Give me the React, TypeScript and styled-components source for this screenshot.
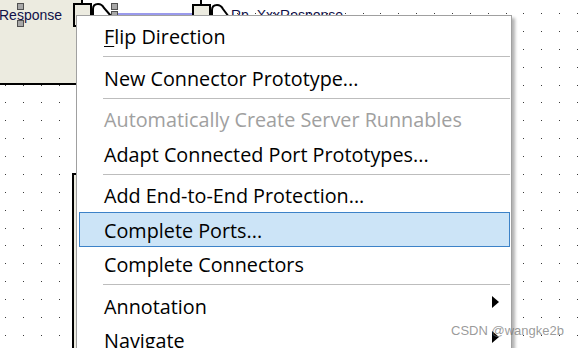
import React from "react";
import styled, { createGlobalStyle } from "styled-components";

const GlobalStyle = createGlobalStyle`
  html, body { margin: 0; padding: 0; background: #fff; overflow: hidden; }
  #root { width: 579px; height: 348px; }
`;

const Canvas = styled.div`
  position: relative;
  width: 579px;
  height: 348px;
  overflow: hidden;
  background: #fff;
  font-family: "Liberation Sans", Arial, sans-serif;
`;

const Layer = styled.svg`
  position: absolute;
  left: 0;
  top: 0;
`;

const SwcBox = styled.div<{ $x: number; $y: number; $w: number; $h: number }>`
  position: absolute;
  left: ${(p) => p.$x}px;
  top: ${(p) => p.$y}px;
  width: ${(p) => p.$w}px;
  height: ${(p) => p.$h}px;
  box-sizing: border-box;
  background: #ecebe0;
  border: 2px solid #000;
`;

const PortLabel = styled.div<{ $x: number; $y: number }>`
  position: absolute;
  left: ${(p) => p.$x}px;
  top: ${(p) => p.$y}px;
  font-size: 14px;
  line-height: 16px;
  color: #101048;
  white-space: nowrap;
`;

const Handle = styled.div<{ $x: number; $y: number }>`
  position: absolute;
  left: ${(p) => p.$x}px;
  top: ${(p) => p.$y}px;
  width: 7px;
  height: 7px;
  box-sizing: border-box;
  background: #a8a8a8;
  border: 1px solid #505050;
`;

const Menu = styled.div`
  position: absolute;
  left: 76px;
  top: 15px;
  width: 436px;
  box-sizing: border-box;
  background: #fff;
  border: 1px solid #a0a0a0;
  padding: 2.5px 0 30px;
  box-shadow: 3px 3px 3px rgba(0, 0, 0, 0.3);
  font-family: "Open Sans", "Noto Sans", sans-serif;
  font-size: 19.8px;
  color: #000;
  display: flex;
  flex-direction: column;
`;

const Item = styled.div<{ $disabled?: boolean; $active?: boolean }>`
  position: relative;
  height: 34.5px;
  line-height: 32.5px;
  margin: 0 1px 0 2px;
  padding: 1.5px 0 0 24px;
  box-sizing: border-box;
  border: 1px solid ${(p) => (p.$active ? "#3c82c8" : "transparent")};
  background: ${(p) => (p.$active ? "#cce4f7" : "transparent")};
  color: ${(p) => (p.$disabled ? "#a0a0a0" : "#000")};
  white-space: nowrap;
`;

const Mnemonic = styled.span`
  text-decoration: underline;
  text-decoration-thickness: 1px;
  text-underline-offset: 2px;
`;

const Separator = styled.div`
  height: 1px;
  margin: 3px 1px 3px 26px;
  background: #bdbdbd;
`;

const SubArrow = styled.span`
  position: absolute;
  right: 10px;
  top: 7px;
  width: 0;
  height: 0;
  border-left: 7px solid #000;
  border-top: 6.5px solid transparent;
  border-bottom: 6.5px solid transparent;
`;

const Watermark = styled.div`
  position: absolute;
  left: 451px;
  top: 324px;
  font-family: "Liberation Sans", Arial, sans-serif;
  font-size: 13px;
  line-height: 13px;
  color: rgba(110, 110, 110, 0.7);
  white-space: nowrap;
`;

const GRID = 17.875;

function DotGrid() {
  const dots: React.ReactElement[] = [];
  for (let r = 0; r < 20; r++) {
    const y = Math.round(13 + r * GRID);
    if (y > 347) break;
    for (let c = 0; c < 33; c++) {
      const x = Math.round(5 + c * GRID);
      dots.push(<rect key={`${r}-${c}`} x={x} y={y} width={1} height={1} />);
    }
  }
  return (
    <Layer width={579} height={348} shapeRendering="crispEdges" fill="#3a3a3a">
      {dots}
    </Layer>
  );
}

function PortShapes() {
  return (
    <Layer width={579} height={348}>
      <rect x={117} y={13} width={76} height={2} fill="#9a9aec" />
      <rect x={74} y={4} width={17} height={22} fill="#ecebe0" stroke="#000" strokeWidth={2} />
      <path d="M93,26 V9 Q93,4 98,4 Q102,4 104,8 L111,16" fill="#fff" stroke="#000" strokeWidth={2} />
      <line x1={201} y1={0} x2={201} y2={5} stroke="#000" strokeWidth={2} />
      <rect x={193} y={5} width={17} height={22} fill="#ecebe0" stroke="#000" strokeWidth={2} />
      <path d="M212,26 V10 Q212,5 217,5 Q221,5 223,9 L229,17" fill="#fff" stroke="#000" strokeWidth={2} />
    </Layer>
  );
}

type Entry =
  | { kind: "item"; label: React.ReactNode; disabled?: boolean; active?: boolean; sub?: boolean }
  | { kind: "sep" };

const entries: Entry[] = [
  { kind: "item", label: (<><Mnemonic>F</Mnemonic>lip Direction</>) },
  { kind: "sep" },
  { kind: "item", label: "New Connector Prototype..." },
  { kind: "sep" },
  { kind: "item", label: "Automatically Create Server Runnables", disabled: true },
  { kind: "item", label: "Adapt Connected Port Prototypes..." },
  { kind: "sep" },
  { kind: "item", label: "Add End-to-End Protection..." },
  { kind: "item", label: "Complete Ports...", active: true },
  { kind: "item", label: "Complete Connectors" },
  { kind: "sep" },
  { kind: "item", label: "Annotation", sub: true },
  { kind: "item", label: "Navigate", sub: true },
];

export default function App() {
  return (
    <>
      <GlobalStyle />
      <Canvas>
        <DotGrid />
        <SwcBox $x={-2} $y={-2} $w={85} $h={87} />
        <SwcBox $x={72} $y={173} $w={300} $h={300} />
        <PortLabel $x={-1} $y={7}>Response</PortLabel>
        <PortLabel $x={231} $y={7}>Rp_XxxResponse</PortLabel>
        <PortShapes />
        <Handle $x={17} $y={3} />
        <Handle $x={17} $y={20} />
        <Handle $x={111} $y={3} />
        <Handle $x={111} $y={11} />
        <Menu>
          {entries.map((e, i) =>
            e.kind === "sep" ? (
              <Separator key={i} />
            ) : (
              <Item key={i} $disabled={e.disabled} $active={e.active}>
                {e.label}
                {e.sub && <SubArrow />}
              </Item>
            )
          )}
        </Menu>
        <Watermark>CSDN @wangke2b</Watermark>
      </Canvas>
    </>
  );
}
